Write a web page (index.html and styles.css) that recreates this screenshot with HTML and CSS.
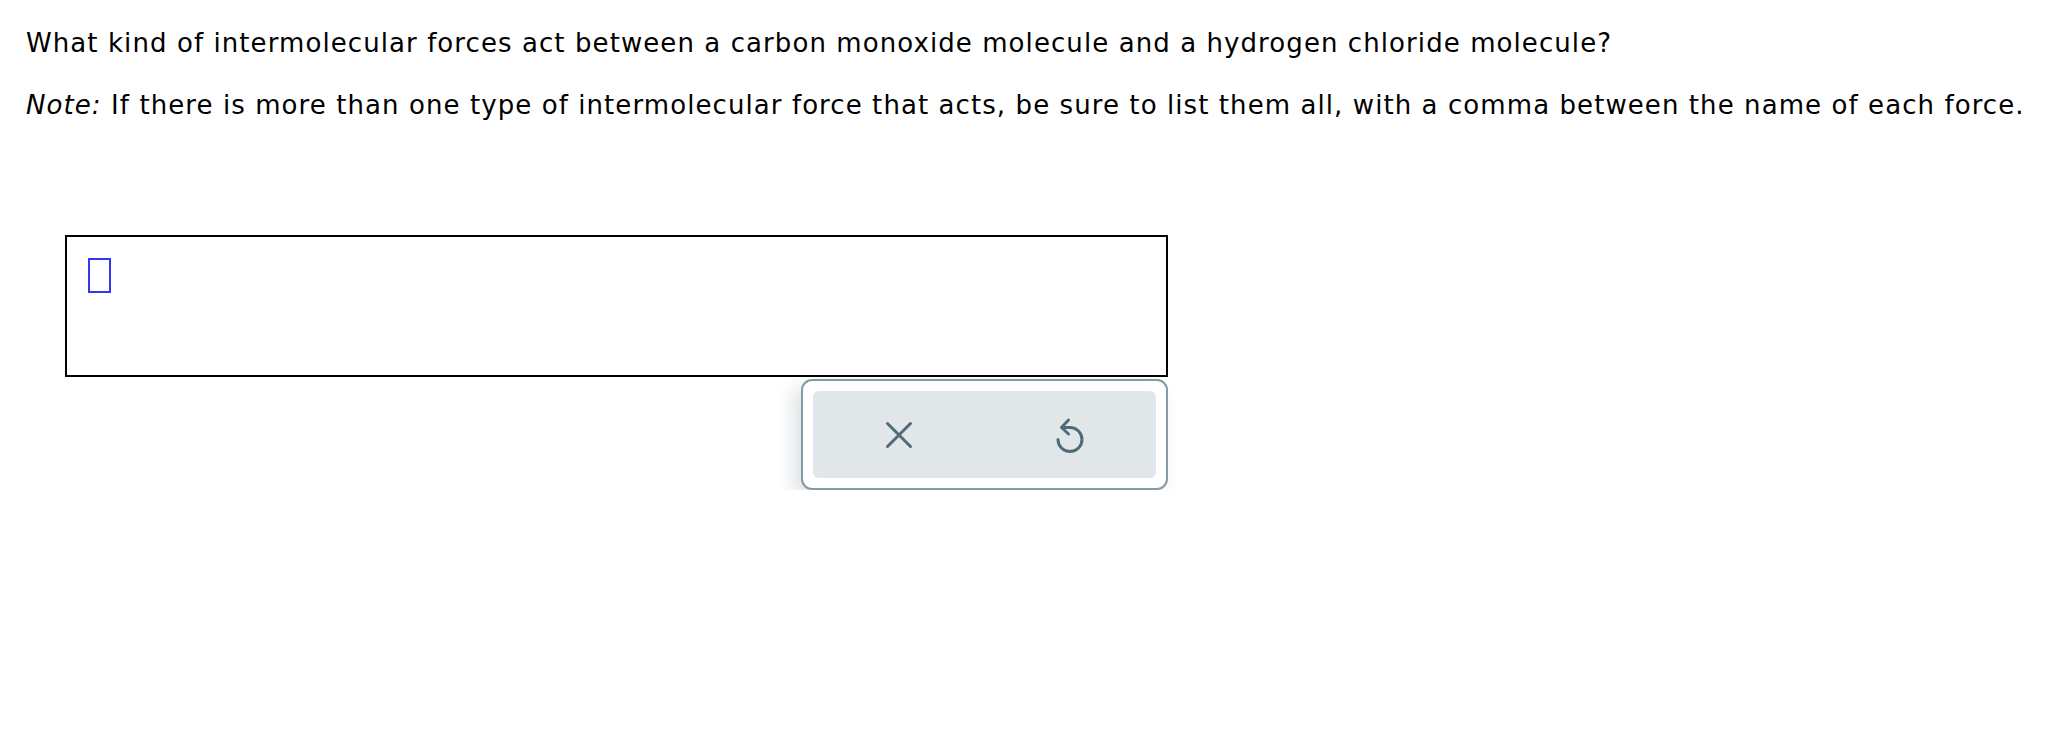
FILE: index.html
```html
<!DOCTYPE html>
<html>
<head>
<meta charset="utf-8">
<link rel="stylesheet" href="styles.css">
</head>
<body>
<div class="question">
  <p class="q">What kind of intermolecular forces act between a carbon monoxide molecule and a hydrogen chloride molecule?</p>
  <p class="q"><i>Note:</i> If there is more than one type of intermolecular force that acts, be sure to list them all, with a comma between the name of each force.</p>
</div>
<div class="answer">
  <div class="inputbox"><span class="cursor"></span></div>
  <div class="toolbar-row">
    <div class="toolbar">
      <div class="tools">
        <button class="tool" aria-label="Clear">
          <svg width="28" height="28" viewBox="0 0 28 28"><path d="M2.5 2.5 L25.5 25.5 M25.5 2.5 L2.5 25.5" stroke="#4f6b78" stroke-width="3" stroke-linecap="round" fill="none"/></svg>
        </button>
        <button class="tool" aria-label="Undo">
          <svg width="32" height="40" viewBox="0 0 32 40"><path d="M16 12.5 A12 12 0 1 1 4 24.5" stroke="#4f6b78" stroke-width="3" stroke-linecap="round" fill="none"/><path d="M14.5 5 L7.5 12.5 L14.5 19" stroke="#4f6b78" stroke-width="3" stroke-linecap="round" stroke-linejoin="round" fill="none"/><path d="M8 12.5 L16 12.5" stroke="#4f6b78" stroke-width="3" stroke-linecap="round"/></svg>
        </button>
      </div>
    </div>
  </div>
</div>
</body>
</html>
```
FILE: styles.css
```css
html, body {
  margin: 0;
  padding: 0;
  background: #ffffff;
}
body {
  font-family: "DejaVu Sans", Verdana, sans-serif;
  color: #000;
}
.question {
  padding: 28px 0 0 26px;
}
.q {
  margin: 0;
  font-size: 26px;
  letter-spacing: 1.08px;
  line-height: 30px;
  white-space: nowrap;
}
.q + .q {
  margin-top: 32px;
}
.answer {
  width: 1103px;
  margin: 115px 0 0 65px;
}
.inputbox {
  box-sizing: border-box;
  height: 142px;
  border: 2px solid #000;
  padding: 21px 0 0 21px;
}
.cursor {
  display: block;
  box-sizing: border-box;
  width: 23px;
  height: 35px;
  border: 2px solid #3636f2;
}
.toolbar-row {
  display: flex;
  justify-content: flex-end;
  padding-top: 2px;
}
.toolbar {
  box-sizing: border-box;
  width: 367px;
  height: 111px;
  border: 2px solid #869aa4;
  border-radius: 11px;
  padding: 10px;
  background: #fff;
  box-shadow: -8px 8px 18px rgba(90, 110, 120, 0.2);
}
.tools {
  display: flex;
  height: 100%;
  background: #e1e6e9;
  border-radius: 6px;
}
.tool {
  flex: 1;
  display: flex;
  align-items: center;
  justify-content: center;
  border: 0;
  background: transparent;
  padding: 0;
}
```
